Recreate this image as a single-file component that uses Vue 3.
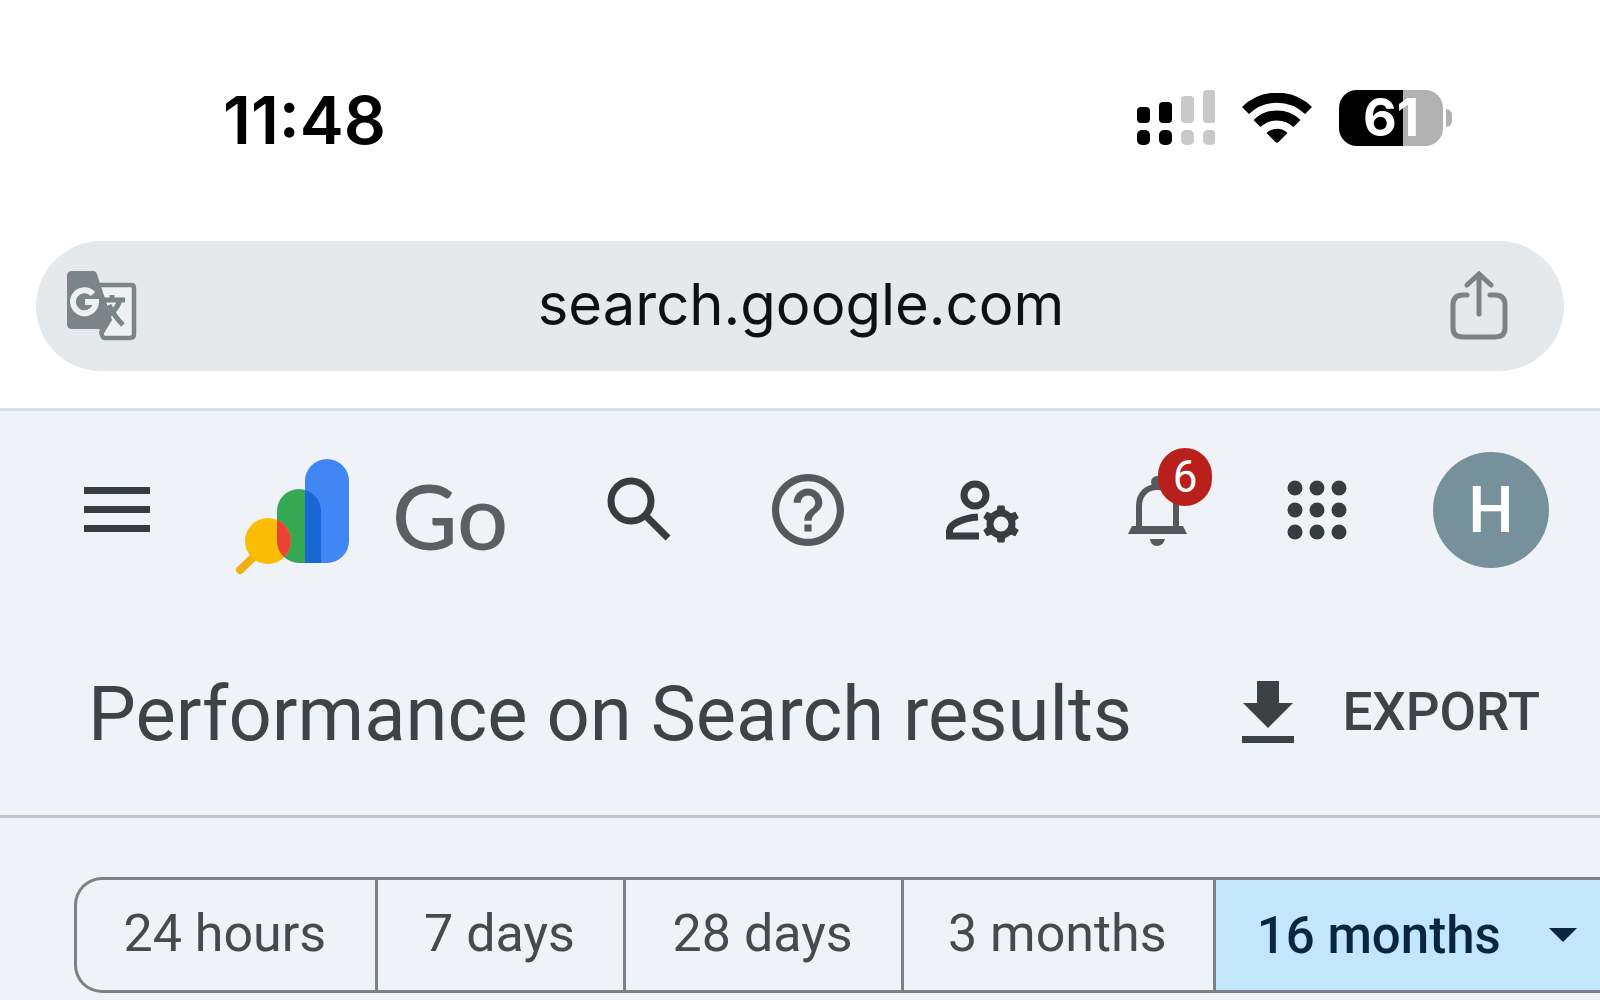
<template>
    <div class="screen">
        <div class="status-bar">
            <time class="clock">11:48</time>
            <div class="status-icons">
                <svg class="signal" viewBox="0 0 78 56" aria-hidden="true">
                    <g v-for="(bar, i) in signalBars" :key="i" :fill="bar.on ? '#000' : '#c9c9c9'">
                        <rect :x="i * 22" :y="bar.top" width="13" :height="33 - bar.top" rx="4" />
                        <rect :x="i * 22" y="40" width="13" height="15" rx="5" />
                    </g>
                </svg>
                <svg class="wifi" viewBox="0 0 70 50" aria-hidden="true">
                    <path d="M3.500 17.500 A45 45 0 0 1 66.500 17.500" fill="none" stroke="#000" stroke-width="10" />
                    <path d="M15 30.500 A29 29 0 0 1 55 30.500" fill="none" stroke="#000" stroke-width="10" />
                    <path d="M24.500 40 A15 15 0 0 1 45.500 40 L36.500 49 Q35 50.500 33.500 49 Z" fill="#000" />
                </svg>
                <div class="battery">
                    <span class="battery-body">61</span>
                    <span class="battery-cap"></span>
                </div>
            </div>
        </div>

        <div class="address-bar">
            <button class="plain" aria-label="Translate page">
                <svg class="translate" viewBox="0 0 70 70">
                    <path d="M33 14 H64 Q67 14 67 17 V63 Q67 67 63 67 H38 Q35 67 34 60" fill="#eef1f2" stroke="#7b8486" stroke-width="4.500" />
                    <path d="M5 0 H27 Q29 0 30 3 L45 49 L36 64 L32 58 H5 Q0 58 0 53 V5 Q0 0 5 0Z" fill="#7b8486" />
                    <path d="M26 23 A11.500 11.500 0 1 0 29 31 H18" fill="none" stroke="#eef1f2" stroke-width="6" />
                    <path d="M34 29 H58 M45 24 V29 M53 29 Q50 40 36 48 M42 34 Q47 45 56 54" fill="none" stroke="#7b8486" stroke-width="5" />
                </svg>
            </button>
            <a class="url" href="#">search.google.com</a>
            <button class="plain" aria-label="Share">
                <svg class="share" viewBox="0 0 60 70" fill="none" stroke="#7d8385" stroke-width="5" stroke-linecap="round">
                    <path d="M18 24 H14 Q4 24 4 34 V57 Q4 66 14 66 H46 Q56 66 56 57 V34 Q56 24 46 24 H41" />
                    <path d="M30 43 V4 M18 14 L30 3 L42 14" />
                </svg>
            </button>
        </div>

        <header class="toolbar">
            <div class="brand">
                <button class="plain" aria-label="Menu">
                    <svg class="burger" viewBox="0 0 66 46" fill="#373c3e">
                        <path d="M0 0H66V7H0ZM0 19H66V26H0ZM0 38H66V45H0Z" />
                    </svg>
                </button>
                <svg class="logo" viewBox="0 0 118 118" aria-hidden="true">
                    <defs>
                        <clipPath id="green-bar"><rect x="44" y="31" width="44" height="74" rx="22" /></clipPath>
                    </defs>
                    <path d="M7 112 L26 94" stroke="#efb10f" stroke-width="8" stroke-linecap="round" />
                    <path d="M44 53 a22 22 0 0 1 44 0 V105 H66 a22 22 0 0 1 -22 -22Z" fill="#34a853" />
                    <circle cx="35" cy="83" r="23" fill="#fbbc04" />
                    <circle cx="35" cy="83" r="23" fill="#ea4335" clip-path="url(#green-bar)" />
                    <path d="M72 23 a22 22 0 0 1 44 0 V83 a22 22 0 0 1 -22 22 H72Z" fill="#4285f4" />
                    <path d="M72 32 a22 22 0 0 1 16 21 V105 H72Z" fill="#1967d2" />
                </svg>
                <span class="brand-name">Go</span>
            </div>

            <button class="plain" aria-label="Search">
                <svg class="icon" viewBox="0 0 90 90" fill="none" stroke="#373c3e">
                    <circle cx="37" cy="36" r="20" stroke-width="7" />
                    <path d="M51 50 L74 73" stroke-width="7" />
                </svg>
            </button>
            <button class="plain" aria-label="Help">
                <svg class="icon" viewBox="-0.500 -0.500 25 25" fill="#55595c">
                    <path d="M11 18h2v-2h-2v2zm1-16C6.480 2 2 6.480 2 12s4.480 10 10 10 10-4.480 10-10S17.520 2 12 2zm0 18c-4.410 0-8-3.590-8-8s3.590-8 8-8 8 3.590 8 8-3.590 8-8 8zm0-14c-2.210 0-4 1.790-4 4h2c0-1.100.9-2 2-2s2 .9 2 2c0 2-3 1.750-3 5h2c0-2.250 3-2.500 3-5 0-2.210-1.790-4-4-4z" />
                </svg>
            </button>
            <button class="plain" aria-label="User settings">
                <svg class="icon" viewBox="0 0 90 90" fill="none" stroke="#373c3e" stroke-width="7">
                    <circle cx="38" cy="30" r="11" />
                    <path d="M41 52 C26 53 12.500 59 12.500 66 V71 H42" />
                    <circle cx="64" cy="59" r="11" />
                    <path v-for="n in 6" :key="n" d="M60 47 L61 41 H67 L68 47Z" fill="#373c3e" stroke-width="1" :transform="`rotate(${n * 60} 64 59)`" />
                </svg>
            </button>
            <button class="plain bell" aria-label="Notifications">
                <svg class="icon" viewBox="0 0 90 90" fill="none" stroke="#55595c" stroke-width="6">
                    <path d="M27 64 V41 C27 29 35 22 45.500 22 S64 29 64 41 V64" />
                    <path d="M20 61 H71 L75 69 H16Z" fill="#55595c" stroke="none" />
                    <circle cx="45" cy="17" r="6" fill="#55595c" stroke="none" />
                    <path d="M38 74 H53 Q51 81 45 81 T38 74Z" fill="#55595c" stroke="none" />
                </svg>
                <span class="badge">6</span>
            </button>
            <button class="plain" aria-label="Google apps">
                <svg class="icon" viewBox="0 0 90 90" fill="#373c3e">
                    <circle v-for="n in 9" :key="n" :cx="23 + ((n - 1) % 3) * 22" :cy="23 + Math.floor((n - 1) / 3) * 22" r="7.500" />
                </svg>
            </button>
            <button class="plain avatar" aria-label="Account">H</button>
        </header>

        <div class="title-row">
            <h1>Performance on Search results</h1>
            <button class="plain export">
                <svg class="download" viewBox="0 0 52 62" fill="#3c4143">
                    <path d="M15 0H37V22H51L26 47L1 22H15ZM0 55H52V62H0Z" />
                </svg>
                EXPORT
            </button>
        </div>

        <main class="content">
            <div class="ranges">
                <button
                    v-for="range in ranges"
                    :key="range"
                    class="range"
                    :class="{ active: range === selected }"
                    @click="selected = range"
                >
                    {{ range }}
                    <svg v-if="range === '16 months'" class="caret" viewBox="0 0 28 14"><path d="M0 0H28L14 14Z" /></svg>
                </button>
            </div>
        </main>
    </div>
</template>

<script setup>
    import { ref } from 'vue';

    const signalBars = [
        { top: 17, on: true },
        { top: 12, on: true },
        { top: 6, on: false },
        { top: 0, on: false },
    ];

    const ranges = ['24 hours', '7 days', '28 days', '3 months', '16 months'];
    const selected = ref('16 months');
</script>

<style>
    body {
        background: #eff3f8;
        overflow: hidden;
    }
</style>

<style scoped>
    .screen {
        font-family: Roboto, sans-serif;
        color: #3e4345;
        background: #fff;
    }
    .screen svg {
        display: block;
        flex: none;
    }
    .plain {
        display: flex;
        align-items: center;
        padding: 0;
        border: none;
        background: none;
        color: inherit;
        font: inherit;
        cursor: pointer;
    }

    .status-bar {
        display: flex;
        align-items: center;
        justify-content: space-between;
        height: 236px;
        padding: 0 148px 0 223px;
        margin-bottom: 5px;
    }
    .clock {
        padding-top: 3px;
        font-family: Inter, sans-serif;
        font-size: 66px;
        font-weight: 600;
        color: #000;
    }
    .status-icons {
        display: flex;
        align-items: center;
        gap: 27px;
    }
    .signal {
        width: 78px;
    }
    .wifi {
        width: 70px;
    }
    .battery {
        display: flex;
        align-items: center;
        gap: 3px;
    }
    .battery-body {
        width: 104px;
        border-radius: 18px;
        background: linear-gradient(90deg, #000 62%, #b1b1b1 62%);
        color: #fff;
        font-family: Inter, sans-serif;
        font-size: 52px;
        font-weight: 700;
        line-height: 56px;
        text-align: center;
    }
    .battery-cap {
        width: 6px;
        height: 18px;
        border-radius: 0 6px 6px 0;
        background: #b1b1b1;
    }

    .address-bar {
        display: grid;
        grid-template-columns: 1fr auto 1fr;
        align-items: center;
        height: 130px;
        margin: 0 36px;
        padding: 0 55px 0 31px;
        border-radius: 65px;
        background: #e5e9ec;
    }
    .address-bar .plain:last-child {
        justify-self: end;
    }
    .translate {
        width: 70px;
    }
    .share {
        width: 60px;
    }
    .url {
        padding: 0 0 4px 26px;
        font-family: Inter, sans-serif;
        font-size: 58px;
        line-height: 70px;
        color: #0c1214;
        text-decoration: none;
    }

    .toolbar {
        display: grid;
        grid-template-columns: 555fr 168fr 170fr 178fr 172fr 148fr 200fr;
        align-items: center;
        justify-items: center;
        height: 198px;
        margin-top: 37px;
        padding-right: 9px;
        border-top: 3px solid #dcdee1;
        background: #eff3f8;
    }
    .brand {
        display: flex;
        align-items: center;
        justify-self: start;
        padding-left: 84px;
    }
    .burger {
        width: 66px;
    }
    .logo {
        width: 118px;
        margin: 14px 41px 0 83px;
    }
    .brand-name {
        padding-top: 10px;
        font-family: Lato, sans-serif;
        font-size: 90px;
        font-weight: 500;
        line-height: 88px;
        color: #5b5f63;
    }
    .icon {
        width: 90px;
    }
    .bell {
        position: relative;
    }
    .badge {
        position: absolute;
        top: -17px;
        left: 46px;
        width: 54px;
        border-radius: 29px;
        background: #b9201c;
        color: #fff;
        font-size: 44px;
        line-height: 58px;
        text-align: center;
    }
    .avatar {
        justify-content: center;
        width: 116px;
        height: 116px;
        border-radius: 50%;
        background: #76919b;
        color: #fff;
        font-size: 64px;
        font-weight: 500;
    }

    .title-row {
        display: flex;
        align-items: center;
        justify-content: space-between;
        height: 206px;
        padding: 0 60px 0 88px;
        border-bottom: 3px solid #c3c7cb;
        background: #eff3f8;
    }
    h1 {
        margin: 0;
        padding-top: 4px;
        font-size: 76px;
        font-weight: 450;
    }
    .export {
        gap: 48px;
        font-size: 53px;
        font-weight: 500;
    }
    .download {
        width: 52px;
    }

    .content {
        padding: 59px 0 7px 74px;
        background: #eff3f8;
    }
    .ranges {
        display: grid;
        grid-template-columns: 301fr 249fr 278fr 312fr 385fr;
        border: 3px solid #7b8285;
        border-right: none;
        border-radius: 28px 0 0 28px;
        overflow: hidden;
    }
    .range {
        display: flex;
        align-items: center;
        justify-content: center;
        gap: 48px;
        height: 110px;
        padding: 0 2px 4px 0;
        border: none;
        border-right: 3px solid #7b8285;
        background: none;
        color: #444a4d;
        font-family: inherit;
        font-size: 52px;
        font-weight: 450;
        white-space: nowrap;
        cursor: pointer;
    }
    .range:last-child {
        border-right: none;
    }
    .range.active {
        padding: 0 0 0 18px;
        background: #c2e7fd;
        color: #0a2540;
        font-size: 51px;
        font-weight: 500;
    }
    .caret {
        width: 28px;
        fill: currentColor;
    }
</style>
